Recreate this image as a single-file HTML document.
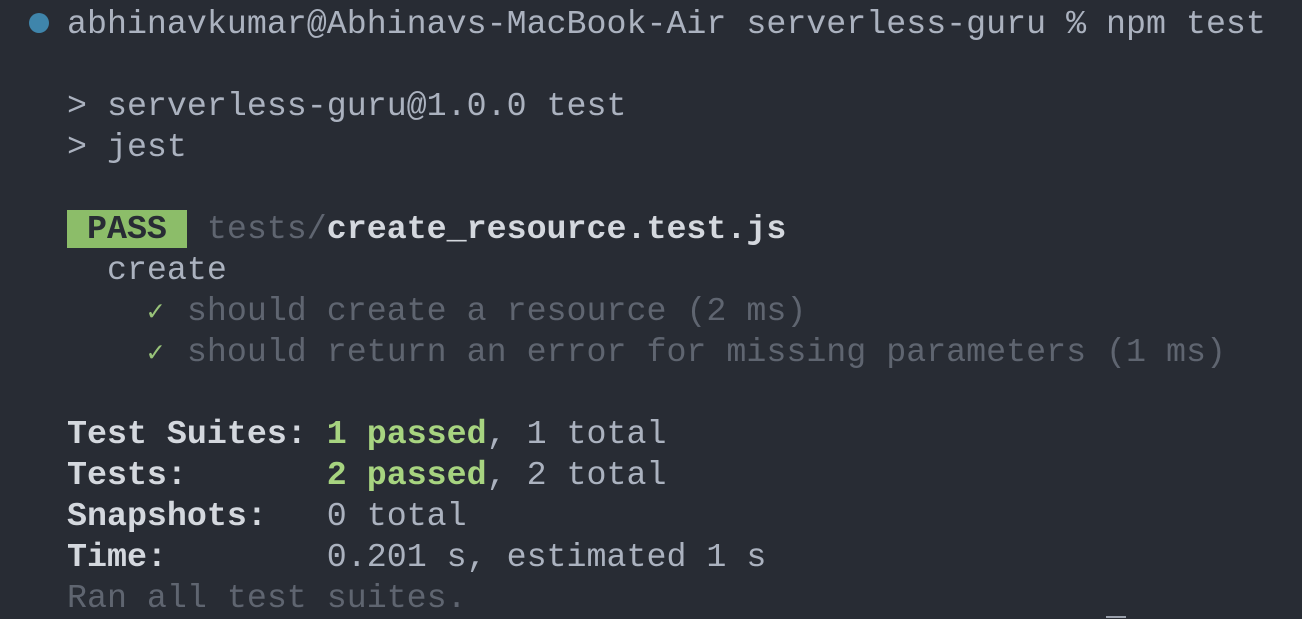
<!DOCTYPE html>
<html><head><meta charset="utf-8"><style>
html,body{margin:0;padding:0;background:#282c34;width:1302px;height:618px;overflow:hidden}
pre{position:absolute;left:67px;top:4px;margin:0;font-family:"Liberation Mono",monospace;font-size:33.3px;line-height:41px;color:#abb2bf;white-space:pre}
.d{color:#5f6570}.b{font-weight:bold;color:#d4d8de}.g{color:#98c379;font-family:"DejaVu Sans Mono",monospace;font-size:28px;line-height:0;letter-spacing:3.1px}.gb{color:#a7d480;font-weight:bold}
.pass{background:#8cbd69;color:#282c34;font-weight:bold}
.dot{position:absolute;left:29px;top:13px;width:20px;height:20px;border-radius:50%;background:#3f85ab}
</style></head><body>
<div class="dot"></div>
<pre>abhinavkumar@Abhinavs-MacBook-Air serverless-guru % npm test

&gt; serverless-guru@1.0.0 test
&gt; jest

<span class="pass"> PASS </span> <span class="d">tests/</span><span class="b">create_resource.test.js</span>
  create
    <span class="g">✓</span> <span class="d">should create a resource (2 ms)</span>
    <span class="g">✓</span> <span class="d">should return an error for missing parameters (1 ms)</span>

<span class="b">Test Suites: </span><span class="gb">1 passed</span>, 1 total
<span class="b">Tests:       </span><span class="gb">2 passed</span>, 2 total
<span class="b">Snapshots:   </span>0 total
<span class="b">Time:        </span>0.201 s, estimated 1 s
<span class="d">Ran all test suites.</span></pre>
<div style="position:absolute;left:1106px;top:616px;width:20px;height:2px;background:#9aa0ab"></div>
</body></html>
